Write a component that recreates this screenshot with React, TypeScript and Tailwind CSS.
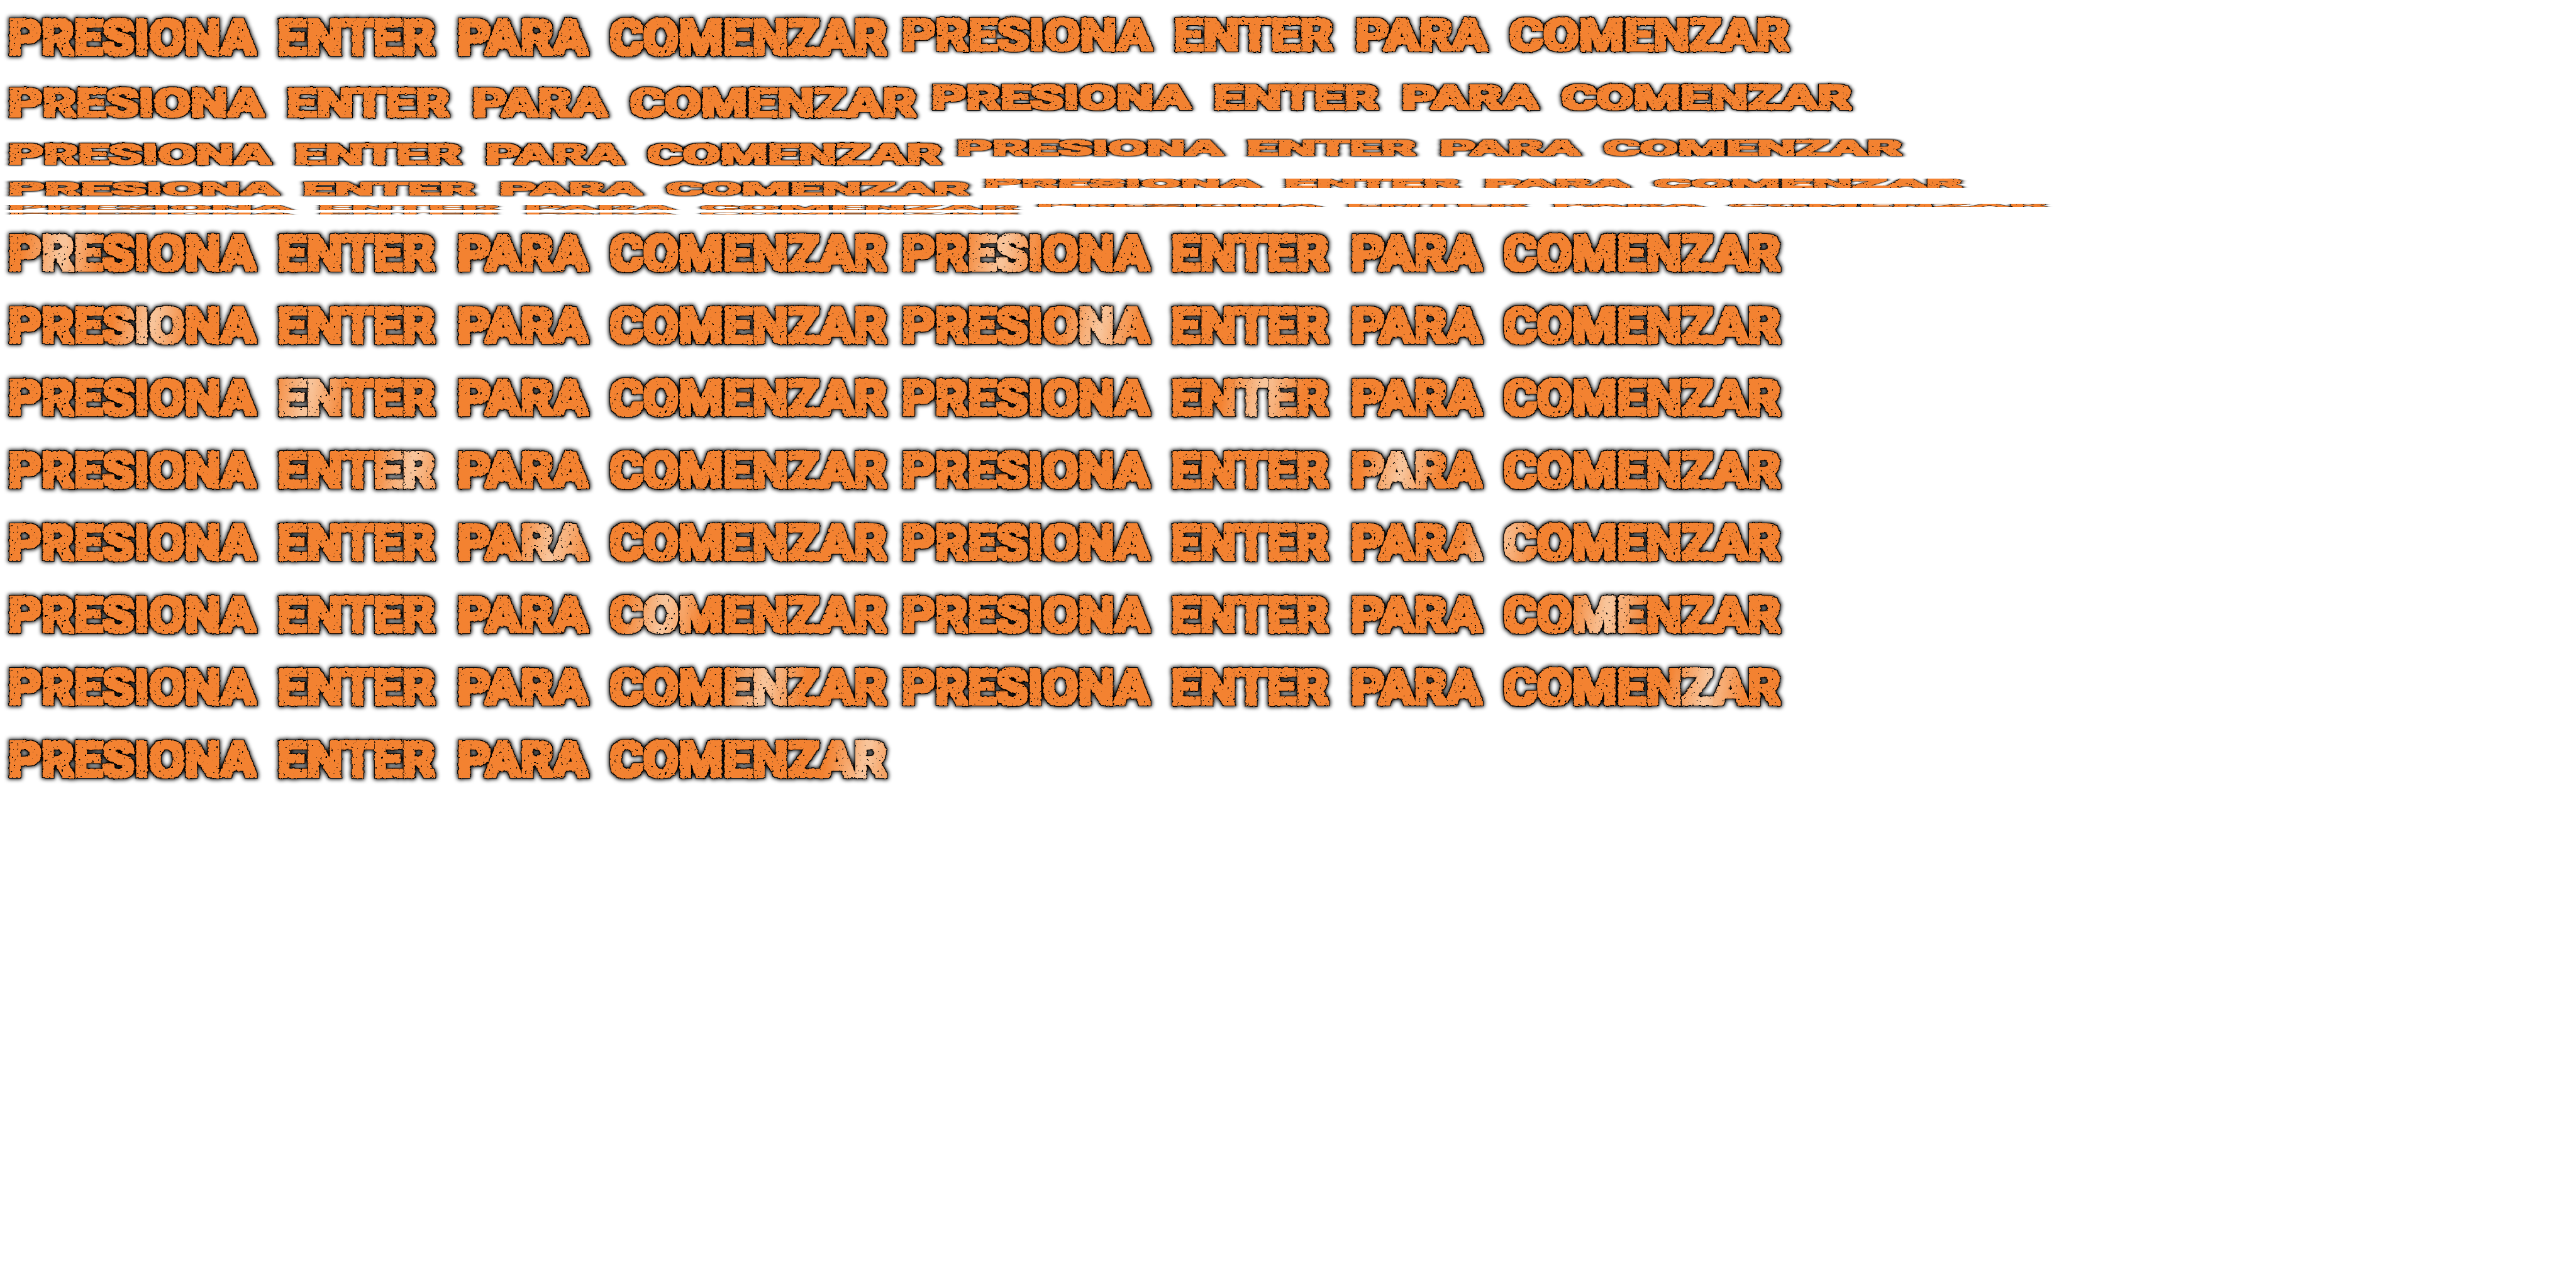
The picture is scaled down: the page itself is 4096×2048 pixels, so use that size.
import React from 'react';

const TEXT = 'PRESIONA ENTER PARA COMENZAR';
const BASE_HEIGHT = 59;

// natural width of the line, so every frame can be stretched to its own size
const measureBase = () => {
  const ctx = document.createElement('canvas').getContext('2d');
  if (!ctx) return 1400;
  ctx.font = '700 76px Roboto';
  return ctx.measureText(TEXT).width + 3 * 14;
};
const BASE_WIDTH = measureBase();

interface FrameProps {
  w?: number;
  h?: number;
  top?: number;
  glow?: number;
}

const Frame: React.FC<FrameProps> = ({ w = 1397, h = 59, top = 0, glow }) => {
  const sx = w / BASE_WIDTH;
  const sy = h / BASE_HEIGHT;
  const style: React.CSSProperties = {
    transform: `translateY(${top}px) scale(${sx}, ${sy}) translateY(-7px)`,
  };
  if (glow !== undefined) {
    const c = glow / sx;
    style.backgroundImage = `linear-gradient(100deg, #f38231 ${c - 55}px, #f8c49a ${c}px, #f38231 ${c + 55}px)`;
  }
  return (
    <div className="shrink-0" style={{ width: w, height: h + top }}>
      <span
        style={style}
        className={
          'inline-block origin-top-left whitespace-pre font-["Roboto",sans-serif] text-[76px] font-bold leading-none [word-spacing:14px] [filter:url(#rough)] ' +
          (glow !== undefined ? 'bg-clip-text text-transparent' : 'text-[#f38231]')
        }
      >
        {TEXT}
      </span>
    </div>
  );
};

const glowRows: [number, number?][] = [
  [90, 163],
  [231, 317],
  [475, 571],
  [638, 788],
  [860, 942],
  [1032, 1110],
  [1191, 1268],
  [1350],
];

export default function App() {
  return (
    <div className="min-h-[2048px] bg-white pt-[27px]">
      <svg className="absolute h-0 w-0" aria-hidden="true">
        <defs>
          <filter id="rough" x="-2%" y="-40%" width="104%" height="180%" colorInterpolationFilters="sRGB">
            <feMorphology in="SourceGraphic" operator="dilate" radius="2.5" result="fat" />
            <feTurbulence type="fractalNoise" baseFrequency="0.2" numOctaves="2" seed="4" result="wave" />
            <feDisplacementMap in="fat" in2="wave" scale="3.5" xChannelSelector="R" yChannelSelector="G" result="body" />
            <feFlood floodColor="#000000" result="ink" />
            <feComposite in="ink" in2="body" operator="in" result="edgeBase" />
            <feMorphology in="edgeBase" operator="dilate" radius="1" result="edge" />
            <feMorphology in="edgeBase" operator="dilate" radius="1.5" result="halo" />
            <feGaussianBlur in="halo" stdDeviation="3" result="shadow" />
            <feTurbulence type="fractalNoise" baseFrequency="0.24" numOctaves="2" seed="9" result="noise" />
            <feColorMatrix in="noise" type="matrix" values="0 0 0 0 0  0 0 0 0 0  0 0 0 0 0  30 0 0 0 -21.6" result="specks" />
            <feComposite in="specks" in2="body" operator="in" result="spots" />
            <feMerge>
              <feMergeNode in="shadow" />
              <feMergeNode in="edge" />
              <feMergeNode in="body" />
              <feMergeNode in="spots" />
            </feMerge>
          </filter>
        </defs>
      </svg>

      <div className="flex h-[107px] items-start gap-6 pl-[13px]">
        <Frame top={2} />
        <Frame w={1411} h={55} />
      </div>
      <div className="flex h-[88px] items-start gap-6 pl-[13px]">
        <Frame w={1444} h={48} top={5} />
        <Frame w={1463} h={40} />
      </div>
      <div className="flex h-[62px] items-start gap-6 pl-[13px]">
        <Frame w={1484} h={35} top={5} />
        <Frame w={1503} h={26} />
      </div>
      <div className="flex h-[39px] items-start gap-6 pl-[13px]">
        <Frame w={1528} h={22} top={5} />
        <Frame w={1555} h={14} />
      </div>
      <div className="flex h-[16px] items-start gap-7 pl-[13px]">
        <Frame w={1607} h={9} top={2} />
        <Frame w={1607} h={6} />
      </div>
      <div className="flex h-[33px] items-start pl-[13px]">
        <Frame w={1607} h={2} />
      </div>

      {glowRows.map(([a, b], i) => (
        <div key={i} className="flex h-[115px] items-start gap-6 pl-[13px]">
          <Frame glow={a} />
          {b !== undefined && <Frame glow={b} />}
        </div>
      ))}
    </div>
  );
}
